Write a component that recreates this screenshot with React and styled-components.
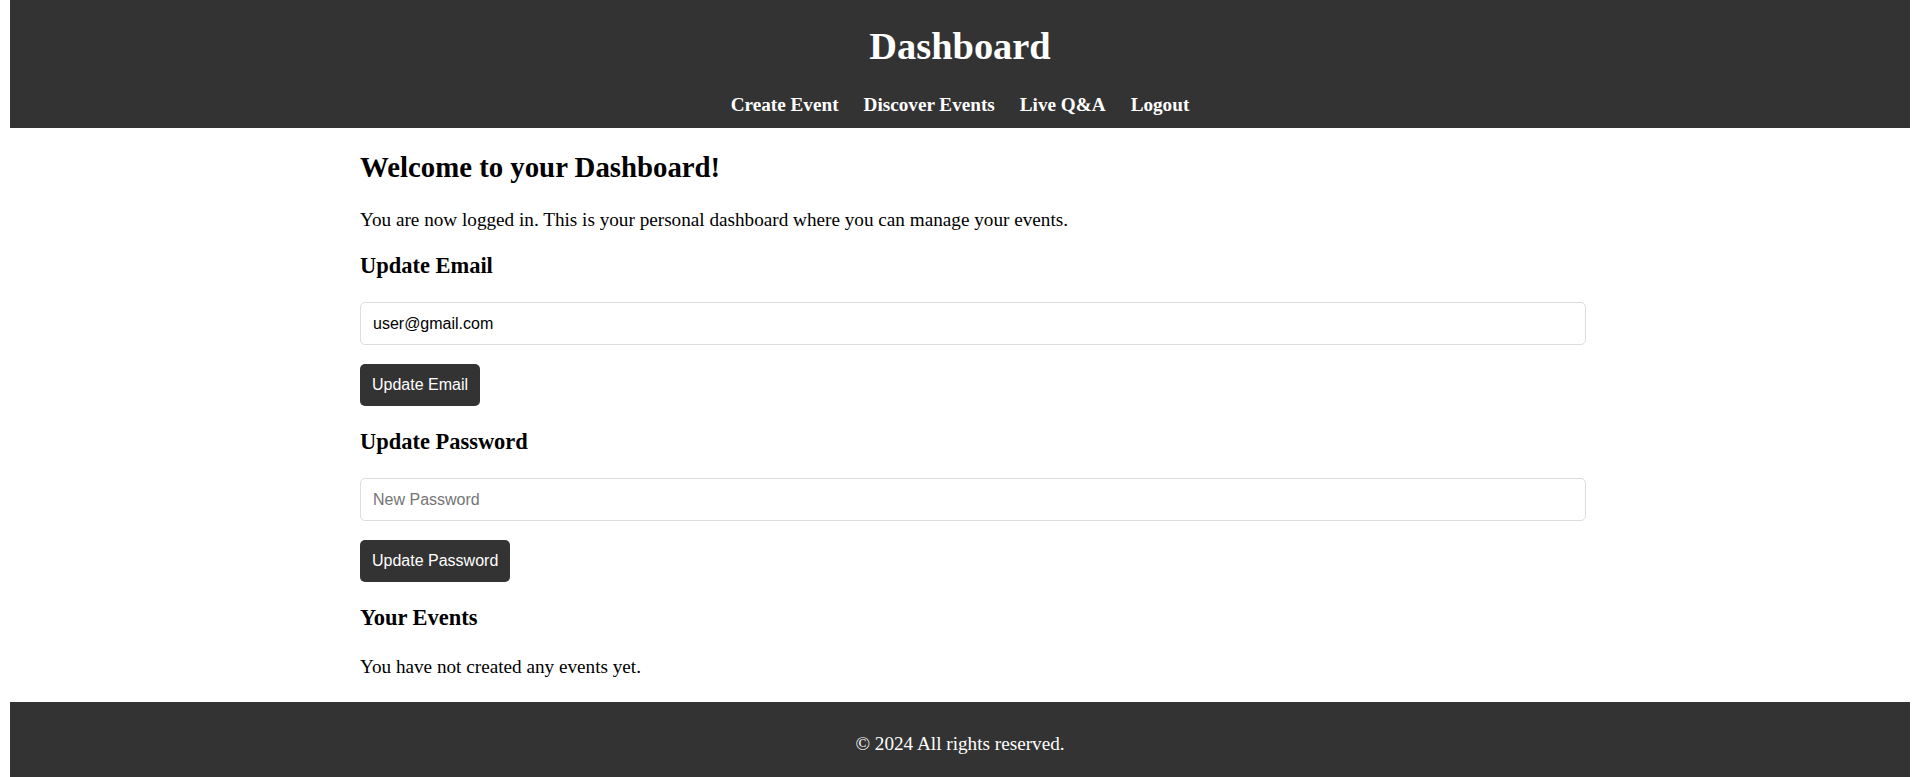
import React from "react";
import styled, { createGlobalStyle } from "styled-components";

const GlobalStyle = createGlobalStyle`
  html, body {
    margin: 0;
    padding: 0;
  }
  body {
    margin: 0 10px;
    background: #fff;
    color: #000;
    font-family: "Liberation Serif", "Times New Roman", serif;
    font-size: 19.2px;
  }
`;

const Header = styled.header`
  background: #333;
  color: #fff;
  text-align: center;
  padding: 24px 0 12px;
`;

const Title = styled.h1`
  margin: 0;
  font-size: 38.4px;
  line-height: 44px;
  font-weight: bold;
`;

const Nav = styled.nav`
  margin-top: 26px;
`;

const NavList = styled.ul`
  list-style: none;
  margin: 0;
  padding: 0;
  display: flex;
  justify-content: center;
  gap: 25px;
`;

const NavLink = styled.a`
  color: #fff;
  text-decoration: none;
  font-weight: bold;
  font-size: 19.2px;
  line-height: 22px;
`;

const Main = styled.main`
  width: 1200px;
  margin: 0 auto;
  padding: 0 0 24px;
`;

const Heading = styled.h2`
  margin: 23px 0 0;
  font-size: 28.8px;
  line-height: 33px;
  font-weight: bold;
`;

const SubHeading = styled.h3`
  margin: ${(p) => p.$top}px 0 0;
  font-size: 22.46px;
  line-height: 26px;
  font-weight: bold;
`;

const Text = styled.p`
  margin: ${(p) => p.$top}px 0 0;
  font-size: 19.2px;
  line-height: 22px;
`;

const Form = styled.form`
  display: flex;
  flex-direction: column;
  align-items: flex-start;
`;

const Input = styled.input`
  display: block;
  box-sizing: border-box;
  width: 1226px;
  height: 43px;
  margin-top: 23px;
  padding: 0 12px;
  border: 1px solid #ddd;
  border-radius: 5px;
  font-family: "Liberation Sans", Arial, sans-serif;
  font-size: 16px;
  color: #000;
  background: #fff;
  outline: none;

  &::placeholder {
    color: #757575;
  }
`;

const Button = styled.button`
  margin-top: 19px;
  height: 42px;
  padding: 0 12px;
  border: none;
  border-radius: 5px;
  background: #333;
  color: #fff;
  font-family: "Liberation Sans", Arial, sans-serif;
  font-size: 16px;
  cursor: pointer;
`;

const Footer = styled.footer`
  background: #333;
  color: #fff;
  text-align: center;
  padding: 31px 0 22px;
`;

const FooterText = styled.p`
  margin: 0;
  font-size: 19.2px;
  line-height: 22px;
`;

const links = ["Create Event", "Discover Events", "Live Q&A", "Logout"];

export default function App() {
  return (
    <>
      <GlobalStyle />
      <Header>
        <Title>Dashboard</Title>
        <Nav>
          <NavList>
            {links.map((l) => (
              <li key={l}>
                <NavLink href="#">{l}</NavLink>
              </li>
            ))}
          </NavList>
        </Nav>
      </Header>
      <Main>
        <Heading>Welcome to your Dashboard!</Heading>
        <Text $top={25}>
          You are now logged in. This is your personal dashboard where you can
          manage your events.
        </Text>

        <SubHeading $top={22}>Update Email</SubHeading>
        <Form onSubmit={(e) => e.preventDefault()}>
          <Input type="email" defaultValue="user@gmail.com" />
          <Button type="submit">Update Email</Button>
        </Form>

        <SubHeading $top={23}>Update Password</SubHeading>
        <Form onSubmit={(e) => e.preventDefault()}>
          <Input type="password" placeholder="New Password" />
          <Button type="submit">Update Password</Button>
        </Form>

        <SubHeading $top={23}>Your Events</SubHeading>
        <Text $top={25}>You have not created any events yet.</Text>
      </Main>
      <Footer>
        <FooterText>© 2024 All rights reserved.</FooterText>
      </Footer>
    </>
  );
}
